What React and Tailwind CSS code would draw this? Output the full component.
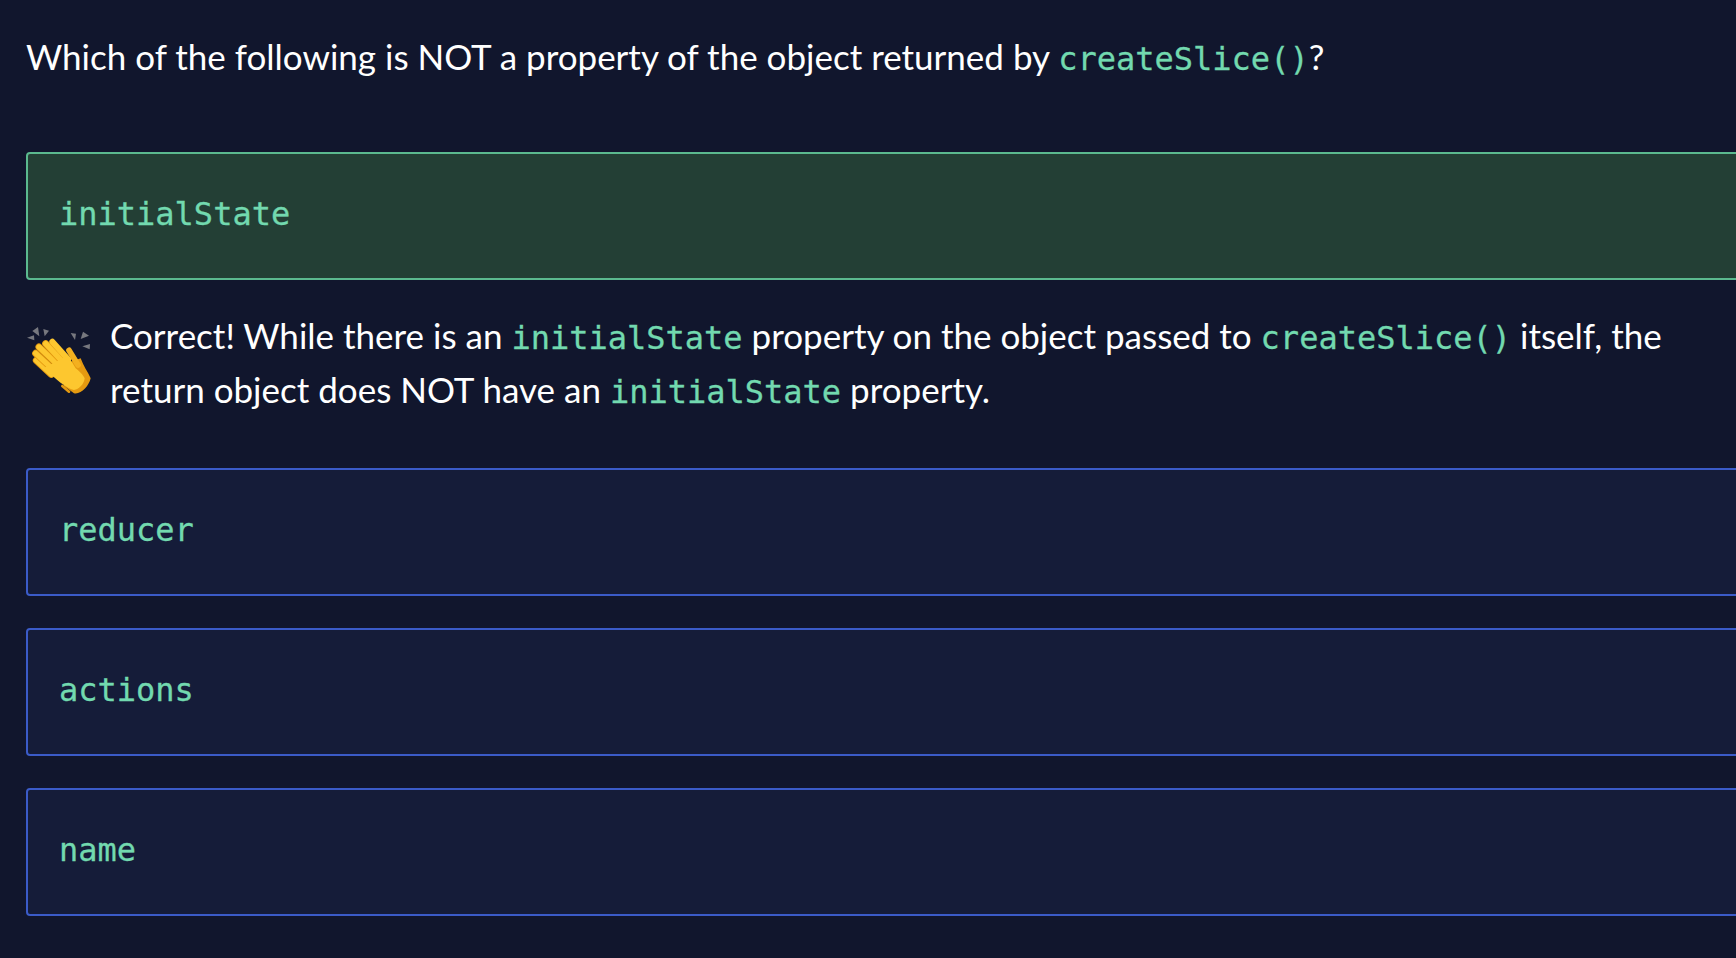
const Code = ({ children }) => (
    <code className="font-['DejaVu_Sans_Mono',monospace] text-[#72d9af] text-[32px] leading-none [-webkit-text-stroke:0.3px_#72d9af]">{children}</code>
);

const Finger = ({ d }) => (
    <>
        <path d={d} stroke="#e59a10" strokeWidth="21" strokeLinecap="round" fill="none" />
        <path d={d} stroke="#fdc72f" strokeWidth="16" strokeLinecap="round" fill="none" />
    </>
);

const ClapIcon = () => (
    <svg width="72" height="76" viewBox="0 0 216 228" className="shrink-0 ml-[-2px]">
        {/* sparks */}
        <path d="M9 50 L30 43 L31 58 Z" fill="#77787f" />
        <path d="M25 30 L42 18 L46 46 Z" fill="#77787f" />
        <path d="M58 24 L75 29 L62 46 Z" fill="#77787f" />
        <path d="M140 36 L156 38 L153 57 Z" fill="#77787f" />
        <path d="M170 54 L177 32 L195 44 Z" fill="#77787f" />
        <path d="M175 76 L198 69 L197 85 Z" fill="#77787f" />
        {/* back hand */}
        <path d="M120 195 L150 217 C170 222 195 195 200 172 C190 150 178 135 170 112 L120 130 Z" fill="#e59a10" />
        <path d="M135 88 L162 132" stroke="#f3b01f" strokeWidth="17" strokeLinecap="round" fill="none" />
        {/* front hand */}
        <Finger d="M37 118 L82 160" />
        <Finger d="M35 97 L92 150" />
        <Finger d="M45 78 L105 135" />
        <Finger d="M65 68 L118 125" />
        <path d="M85 62 L132 115" stroke="#fdc72f" strokeWidth="18" strokeLinecap="round" fill="none" />
        <path d="M60 140 L130 105 C140 115 148 130 155 142 C165 150 178 162 182 172 C180 190 165 205 150 207 C125 200 95 175 60 140 Z" fill="#fdc72f" />
        <path d="M115 195 L135 212" stroke="#e59a10" strokeWidth="8" strokeLinecap="round" fill="none" />
    </svg>
);

const Option = ({ children, correct }) => (
    <div
        className={`w-[1760px] h-[128px] px-[31px] pb-[4px] flex items-center rounded-[4px] border-2 ${
            correct ? 'bg-[#233f35] border-[#5bb98f]' : 'bg-[#151c39] border-[#3b5bc8]'
        }`}
    >
        <Code>{children}</Code>
    </div>
);

export default function App() {
    return (
        <div className="h-screen overflow-hidden bg-[#11162d] pl-[26px] pt-[29px] text-white font-['Lato',sans-serif] text-[35px] leading-[54px]">
            <p className="whitespace-nowrap">
                Which of the following is NOT a property of the object returned by <Code>createSlice()</Code>?
            </p>

            <div className="mt-[69px]">
                <Option correct>initialState</Option>
            </div>

            <div className="flex mt-[28px] w-[1680px]">
                <div className="w-[84px] shrink-0 pt-[13px]">
                    <ClapIcon />
                </div>
                <div className="whitespace-nowrap">
                    <p>
                        Correct! While there is an <Code>initialState</Code> property on the object passed to <Code>createSlice()</Code> itself, the
                    </p>
                    <p>
                        return object does NOT have an <Code>initialState</Code> property.
                    </p>
                </div>
            </div>

            <div className="flex flex-col gap-[32px] mt-[52px]">
                <Option>reducer</Option>
                <Option>actions</Option>
                <Option>name</Option>
            </div>
        </div>
    );
}
